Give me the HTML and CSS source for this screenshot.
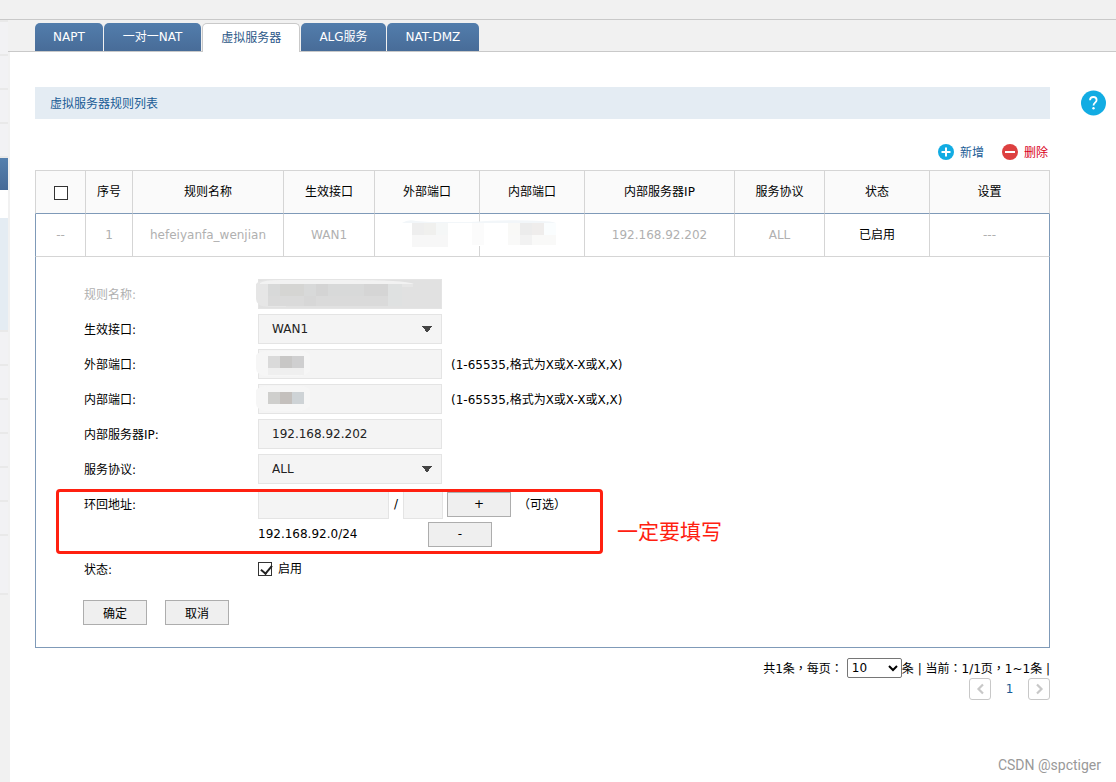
FILE: index.html
```html
<!DOCTYPE html>
<html lang="zh-CN">
<head>
<meta charset="utf-8">
<title>虚拟服务器</title>
<link rel="stylesheet" href="styles.css">
</head>
<body>
<header class="topbar"></header>
<div class="frame">
  <aside class="sidebar">
    <div class="side-item"></div>
    <div class="side-item"></div>
    <div class="side-item"></div>
    <div class="side-item"></div>
    <div class="side-item side-current"></div>
    <div class="side-selected"></div>
    <div class="side-group"></div>
    <div class="side-item"></div>
    <div class="side-item"></div>
    <div class="side-item"></div>
    <div class="side-item"></div>
    <div class="side-item"></div>
    <div class="side-item"></div>
    <div class="side-item side-tall"></div>
    <div class="side-end"></div>
  </aside>
  <main class="main">
    <nav class="tabs">
      <a class="tab" href="#">NAPT</a>
      <a class="tab tab-wide" href="#">一对一NAT</a>
      <a class="tab tab-active" href="#">虚拟服务器</a>
      <a class="tab" href="#">ALG服务</a>
      <a class="tab tab-wide" href="#">NAT-DMZ</a>
    </nav>
    <div class="panel">
      <div class="heading">
        <h1 class="title">虚拟服务器规则列表</h1>
        <button class="help" type="button" aria-label="帮助">
          <svg width="26" height="26" viewBox="0 0 26 26"><circle cx="13.500" cy="13" r="12.500" fill="#12ace3"/><path d="M10 10.200C10.100 8.100 11.500 7 13.300 7s3.300 1.200 3.300 3c0 2.600-3.100 2.700-3.100 5.400" fill="none" stroke="#fff" stroke-width="1.800"/><circle cx="13.500" cy="18.300" r="1.200" fill="#fff"/></svg>
        </button>
      </div>
      <div class="body">
        <div class="toolbar">
          <button class="tool tool-add" type="button"><svg width="16" height="16" viewBox="0 0 16 16"><circle cx="8" cy="8" r="8" fill="#12ace3"/><path d="M8 3.500v9M3.500 8h9" stroke="#fff" stroke-width="2"/></svg>新增</button>
          <button class="tool tool-del" type="button"><svg width="16" height="16" viewBox="0 0 16 16"><circle cx="8" cy="8" r="8" fill="#dd4040"/><path d="M3 8h10" stroke="#fff" stroke-width="2"/></svg>删除</button>
        </div>
        <table class="rules">
          <colgroup><col class="c-check"><col class="c-no"><col class="c-name"><col class="c-if"><col class="c-port"><col class="c-port"><col class="c-ip"><col class="c-proto"><col class="c-port"><col class="c-set"></colgroup>
          <thead>
            <tr><th><input class="check" type="checkbox" aria-label="全选"></th><th>序号</th><th>规则名称</th><th>生效接口</th><th>外部端口</th><th>内部端口</th><th>内部服务器IP</th><th>服务协议</th><th>状态</th><th>设置</th></tr>
          </thead>
          <tbody>
            <tr><td>--</td><td>1</td><td>hefeiyanfa_wenjian</td><td>WAN1</td>
              <td class="masked"><svg class="mask-row" width="160" height="32" viewBox="0 0 160 32"><rect x="10" y="3" width="140" height="24" fill="#fff"/><path d="M2 4q6-4 14-2l14 1h40q40-3 70-1 12 0 16 2z" fill="#f2f6f9"/><rect x="12" y="4" width="12" height="12" fill="#eee"/><rect x="24" y="4" width="12" height="12" fill="#f0f0ee"/><rect x="36" y="4" width="12" height="12" fill="#f5f7f7"/><rect x="12" y="16" width="36" height="12" fill="#f7f7f7"/><rect x="72" y="4" width="12" height="22" fill="#fbfbfb"/><rect x="108" y="4" width="12" height="12" fill="#f9f9f7"/><rect x="120" y="4" width="12" height="12" fill="#ececec"/><rect x="132" y="4" width="12" height="12" fill="#efedec"/><rect x="144" y="4" width="12" height="12" fill="#fafdfe"/><rect x="108" y="16" width="48" height="10" fill="#f9f9f8"/><rect x="120" y="16" width="12" height="10" fill="#f2f2f2"/></svg></td>
              <td></td><td>192.168.92.202</td><td>ALL</td><td class="on">已启用</td><td>---</td></tr>
          </tbody>
        </table>
        <form class="form">
          <div class="row row-off">
            <label class="label" for="name">规则名称:</label>
            <span class="masked"><input class="field" id="name" type="text" disabled><svg class="mask" width="186" height="30" viewBox="0 0 186 30"><path d="M0 5q3-4 12-4h55q70 0 90 4v3H30v20H12Q0 27 0 20z" fill="#e6e6e6"/><path d="M4 4q4-3 20-3h70q54 0 64 4H4z" fill="#f2f2f2"/><rect x="12" y="5" width="120" height="12" fill="#d8d9d9"/><rect x="24" y="5" width="24" height="12" fill="#d5d5d3"/><rect x="60" y="5" width="12" height="12" fill="#d4d4d4"/><rect x="108" y="5" width="24" height="12" fill="#d5d5d5"/><rect x="12" y="17" width="120" height="10" fill="#dadada"/><rect x="48" y="17" width="12" height="10" fill="#d7d7d7"/><rect x="132" y="5" width="14" height="22" fill="#dfe1e1"/></svg></span>
          </div>
          <div class="row">
            <label class="label" for="iface">生效接口:</label>
            <select class="field pick" id="iface"><option>WAN1</option></select>
          </div>
          <div class="row">
            <label class="label" for="outer">外部端口:</label>
            <span class="masked"><input class="field" id="outer" type="text"><svg class="mask" width="60" height="30" viewBox="0 0 60 30"><path d="M0 6q4-4 12-4h34q8 1 8 6v14q-4 5-12 5H8q-8-2-8-8z" fill="#f6f6f6"/><rect x="12" y="7" width="12" height="12" fill="#dadada"/><rect x="24" y="7" width="12" height="12" fill="#c8c7c6"/><rect x="36" y="7" width="12" height="12" fill="#cfcfd0"/><rect x="12" y="19" width="36" height="7" fill="#efefef"/></svg></span>
            <span class="note">(1-65535,格式为X或X-X或X,X)</span>
          </div>
          <div class="row">
            <label class="label" for="inner">内部端口:</label>
            <span class="masked"><input class="field" id="inner" type="text"><svg class="mask" width="60" height="30" viewBox="0 0 60 30"><path d="M0 6q4-4 12-4h34q8 1 8 6v14q-4 5-12 5H8q-8-2-8-8z" fill="#f6f6f6"/><rect x="12" y="8" width="12" height="12" fill="#cfcfcd"/><rect x="24" y="8" width="12" height="12" fill="#c4c0bd"/><rect x="36" y="8" width="12" height="12" fill="#ced3d6"/></svg></span>
            <span class="note">(1-65535,格式为X或X-X或X,X)</span>
          </div>
          <div class="row">
            <label class="label" for="ip">内部服务器IP:</label>
            <input class="field" id="ip" type="text" value="192.168.92.202">
          </div>
          <div class="row">
            <label class="label" for="proto">服务协议:</label>
            <select class="field pick" id="proto"><option>ALL</option></select>
          </div>
          <div class="loopback">
            <div class="row">
              <label class="label" for="loop">环回地址:</label>
              <input class="field field-addr" id="loop" type="text"><span class="slash">/</span><input class="field field-mask" type="text" aria-label="掩码长度"><button class="btn btn-add" type="button">+</button><span class="optional" lang="zh-Hant">（可选）</span>
            </div>
            <div class="row">
              <span class="label"></span><span class="addr">192.168.92.0/24</span><button class="btn" type="button">-</button>
            </div>
            <div class="marker"></div>
            <p class="remark">一定要填写</p>
          </div>
          <div class="row">
            <span class="label">状态:</span>
            <label class="enable"><input class="check" type="checkbox" checked>启用</label>
          </div>
          <div class="actions"><button class="btn" type="button">确定</button><button class="btn" type="button">取消</button></div>
        </form>
        <div class="summary" lang="zh-Hant"><label for="size">共1条，每页：</label><select class="size" id="size"><option>10</option></select><span>条 | 当前：1/1页，1~1条 |</span></div>
        <div class="pager">
          <button class="page-btn" type="button" aria-label="上一页"><svg width="9" height="12" viewBox="0 0 9 12"><path d="M7 1.500L2.500 6 7 10.500" fill="none" stroke="#c8c8c8" stroke-width="2.200"/></svg></button>
          <a class="page" href="#">1</a>
          <button class="page-btn" type="button" aria-label="下一页"><svg width="9" height="12" viewBox="0 0 9 12"><path d="M2 1.500L6.500 6 2 10.500" fill="none" stroke="#c8c8c8" stroke-width="2.200"/></svg></button>
        </div>
      </div>
      <footer class="credit">CSDN @spctiger</footer>
    </div>
  </main>
</div>
</body>
</html>
```
FILE: styles.css
```css
* { box-sizing: border-box; }
body, button, input, select {
  font-family: "DejaVu Sans", "Noto Sans CJK SC", sans-serif;
  font-size: 12px;
}
body {
  margin: 0;
  min-height: 100vh;
  display: flex;
  flex-direction: column;
  background: #f1f1f1;
  color: #000;
  line-height: 18px;
}
a { text-decoration: none; }
button { cursor: pointer; }
.topbar { height: 20px; border-bottom: 1px solid #c9c9c9; }
.frame { flex: 1; display: flex; }

.sidebar { width: 8px; }
.side-item { height: 34px; border-top: 2px solid #e9e9e9; background: #f2f2f4; }
.side-current { background: linear-gradient(#5580ae, #476a97); }
.side-selected { height: 28px; background: #fff; }
.side-group { height: 112px; background: #e4ecf3; }
.side-tall { height: 59px; }
.side-end { border-top: 2px solid #e9e9e9; }

.main { flex: 1; min-width: 0; display: flex; flex-direction: column; }
.tabs {
  display: flex;
  gap: 1px;
  padding: 3px 0 0 27px;
  border-bottom: 1px solid #c9c9c9;
}
.tab {
  height: 28px;
  padding: 0 18px;
  border-radius: 5px 5px 0 0;
  background: linear-gradient(#527dac, #486c98);
  color: #fff;
  line-height: 28px;
}
.tab-wide { padding: 0 19px; }
.tab-active {
  height: 29px;
  margin-bottom: -1px;
  border: 1px solid #c9c9c9;
  border-bottom: 0;
  background: #fff;
  color: #2c5888;
}
.panel {
  flex: 1;
  display: flex;
  flex-direction: column;
  margin-left: 2px;
  padding: 35px 10px 8px 25px;
  background: #fff;
}
.heading { display: flex; align-items: center; gap: 30px; }
.title {
  flex: 1;
  margin: 0;
  padding: 8px 15px 6px;
  background: #e4ecf3;
  color: #1a5c96;
  font-size: 12px;
  font-weight: normal;
}
.help { display: flex; padding: 0; border: 0; background: none; }
.body { margin-right: 56px; }
.toolbar { display: flex; justify-content: flex-end; gap: 18px; padding: 23px 2px 9px 0; }
.tool {
  display: flex;
  align-items: center;
  gap: 6px;
  height: 19px;
  padding: 0;
  border: 0;
  background: none;
}
.tool-add { color: #1a5c96; }
.tool-del { color: #d9001b; }

.rules { width: 100%; table-layout: fixed; border-spacing: 0; }
.c-check { width: 50px; }
.c-no { width: 47px; }
.c-name { width: 151px; }
.c-if { width: 91px; }
.c-port { width: 105px; }
.c-ip { width: 150px; }
.c-proto { width: 90px; }
.c-set { width: 121px; }
.rules th, .rules td {
  height: 43px;
  padding: 0;
  border-left: 1px solid #d5d5d5;
  border-bottom: 1px solid #d5d5d5;
  text-align: center;
  font-weight: normal;
}
.rules th {
  height: 44px;
  border-top: 1px solid #d5d5d5;
  border-bottom-color: #7f9ab8;
  background: #fafafa;
}
.rules th:last-child { border-right: 1px solid #d5d5d5; }
.rules td { color: #b0b0b0; }
.rules td:first-child { border-left-color: #7f9ab8; }
.rules td:last-child { border-right: 1px solid #7f9ab8; }
.rules .on { color: #000; }
.masked { position: relative; }
.mask-row { position: absolute; left: 25px; top: 5px; }
.mask { position: absolute; left: -2px; top: 0; }

.check {
  appearance: none;
  display: inline-block;
  width: 14px;
  height: 14px;
  margin: 0;
  border: 1px solid #333;
  background: #fff;
  vertical-align: middle;
}
.check:checked::before {
  content: "";
  display: block;
  width: 5px;
  height: 9px;
  margin: 0 0 0 4px;
  border: solid #222;
  border-width: 0 2px 2px 0;
  transform: rotate(40deg);
}

.form {
  display: flex;
  flex-direction: column;
  gap: 5px;
  padding: 22px 47px;
  border: 1px solid #7f9ab8;
  border-top: 0;
}
.row { display: flex; align-items: center; height: 30px; }
.row-off { color: #b0b0b0; }
.label { width: 175px; padding: 2px 0 0 1px; }
.field {
  display: block;
  width: 184px;
  height: 30px;
  padding: 0 13px;
  border: 1px solid #e4e4e4;
  border-radius: 0;
  background: #f4f4f4;
  color: #222;
}
.field:disabled { background: #e1e1e1; }
.pick {
  appearance: none;
  background:
    linear-gradient(to bottom left, #444 50%, transparent 50%) right 14px center / 5px 7px no-repeat,
    linear-gradient(to bottom right, #444 50%, transparent 50%) right 9px center / 5px 7px no-repeat,
    #f4f4f4;
}
.note { padding-top: 2px; margin-left: 9px; }
.loopback { position: relative; }
.field-addr { width: 131px; }
.field-mask { width: 40px; }
.slash { width: 14px; text-align: center; }
.btn {
  width: 64px;
  height: 25px;
  padding: 0;
  border: 1px solid #adadad;
  background: #efefef;
}
.btn-add { margin-left: 4px; }
.optional { margin-left: 7px; padding-top: 2px; }
.optional, .summary {
  font-family: "DejaVu Sans", "Noto Sans CJK TC", sans-serif;
  text-spacing-trim: space-all;
}
.addr { width: 170px; }
.marker {
  position: absolute;
  left: -27px;
  top: 0;
  width: 547px;
  height: 65px;
  border: 3px solid #ff2010;
  border-radius: 4px;
}
.remark {
  position: absolute;
  left: 534px;
  top: 29px;
  margin: 0;
  color: #ff2010;
  font-size: 21px;
  line-height: 28px;
}
.enable { display: flex; align-items: center; gap: 6px; }
.actions { display: flex; gap: 18px; padding-top: 11px; }

.summary { display: flex; justify-content: flex-end; align-items: center; padding-top: 10px; }
.summary label, .summary span { padding-top: 2px; }
.size { width: 55px; height: 20px; margin-left: 4px; padding: 0; border: 1px solid #767676; border-radius: 2px; background: #fff; color: #000; }
.pager { display: flex; justify-content: flex-end; align-items: center; }
.page-btn {
  display: flex;
  align-items: center;
  justify-content: center;
  width: 22px;
  height: 22px;
  padding: 0;
  border: 1px solid #c8c8c8;
  border-radius: 3px;
  background: #fff;
}
.page { width: 37px; color: #1a5c96; text-align: center; }
.credit {
  margin-top: auto;
  padding-right: 5px;
  color: #999;
  font-family: Roboto, sans-serif;
  font-size: 14px;
  text-align: right;
}
```
